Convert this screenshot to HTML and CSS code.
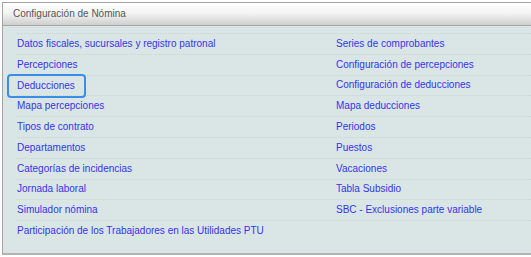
FILE: index.html
```html
<!DOCTYPE html>
<html lang="es">

<head>
    <meta charset="UTF-8">
    <meta name="viewport" content="width=device-width, initial-scale=1.0">
    <title>Configuración de Nómina</title>
    <link rel="stylesheet" href="styles.css">
</head>

<body>
    <div class="panel">
        <div class="panel-header">Configuración de Nómina</div>
        <div class="panel-body">
            <div class="link-grid">
                <div class="cell"><a href="#">Datos fiscales, sucursales y registro patronal</a></div>
                <div class="cell"><a href="#">Series de comprobantes</a></div>
                <div class="cell"><a href="#">Percepciones</a></div>
                <div class="cell"><a href="#">Configuración de percepciones</a></div>
                <div class="cell"><a href="#" class="focused">Deducciones</a></div>
                <div class="cell"><a href="#">Configuración de deducciones</a></div>
                <div class="cell"><a href="#">Mapa percepciones</a></div>
                <div class="cell"><a href="#">Mapa deducciones</a></div>
                <div class="cell"><a href="#">Tipos de contrato</a></div>
                <div class="cell"><a href="#">Periodos</a></div>
                <div class="cell"><a href="#">Departamentos</a></div>
                <div class="cell"><a href="#">Puestos</a></div>
                <div class="cell"><a href="#">Categorías de incidencias</a></div>
                <div class="cell"><a href="#">Vacaciones</a></div>
                <div class="cell"><a href="#">Jornada laboral</a></div>
                <div class="cell"><a href="#">Tabla Subsidio</a></div>
                <div class="cell"><a href="#">Simulador nómina</a></div>
                <div class="cell"><a href="#">SBC - Exclusiones parte variable</a></div>
                <div class="cell"><a href="#">Participación de los Trabajadores en las Utilidades PTU</a></div>
                <div class="cell"></div>
            </div>
        </div>
    </div>
</body>

</html>
```

FILE: styles.css
```css
/* Page */
body {
    margin: 0;
    font-family: "Liberation Sans", Arial, sans-serif;
    background-color: #fff;
    overflow: hidden;
}

/* Outer panel, its right edge is cut off by the window */
.panel {
    margin: 2px 0 0 2px;
    border: 1px solid #a3a3a3;
    border-right: none;
    border-bottom: 2px solid #b3b3b3;
    background-color: #d9e6e5;
}

/* Panel title bar */
.panel-header {
    height: 22px;
    line-height: 22px;
    padding-left: 10px;
    font-size: 10px;
    color: #555;
    background: linear-gradient(to bottom, #ffffff 0%, #f4f4f4 45%, #cfcfcf 100%);
    border-bottom: 1px solid #a8a8a8;
}

/* Panel content */
.panel-body {
    padding: 7px 0 12px 14px;
}

/* Two columns of links */
.link-grid {
    display: grid;
    grid-template-columns: 319px 1fr;
    border-top: 1px dotted #cad6d6;
}

.cell {
    height: 19.8px;
    display: flex;
    align-items: center;
    white-space: nowrap;
    border-bottom: 1px dotted #cad6d6;
}

.cell:nth-last-child(-n+2) {
    border-bottom: none;
}

.cell a {
    font-size: 10px;
    line-height: 14px;
    color: #3434ec;
    text-decoration: none;
}

/* Keyboard focus ring on the active link */
.cell a.focused {
    display: inline-block;
    padding: 3px 9px 3px 8px;
    margin: 0 -9px 0 -8px;
    border-radius: 2px;
    box-shadow: 0 0 0 2px #3a8ee8;
}
```
